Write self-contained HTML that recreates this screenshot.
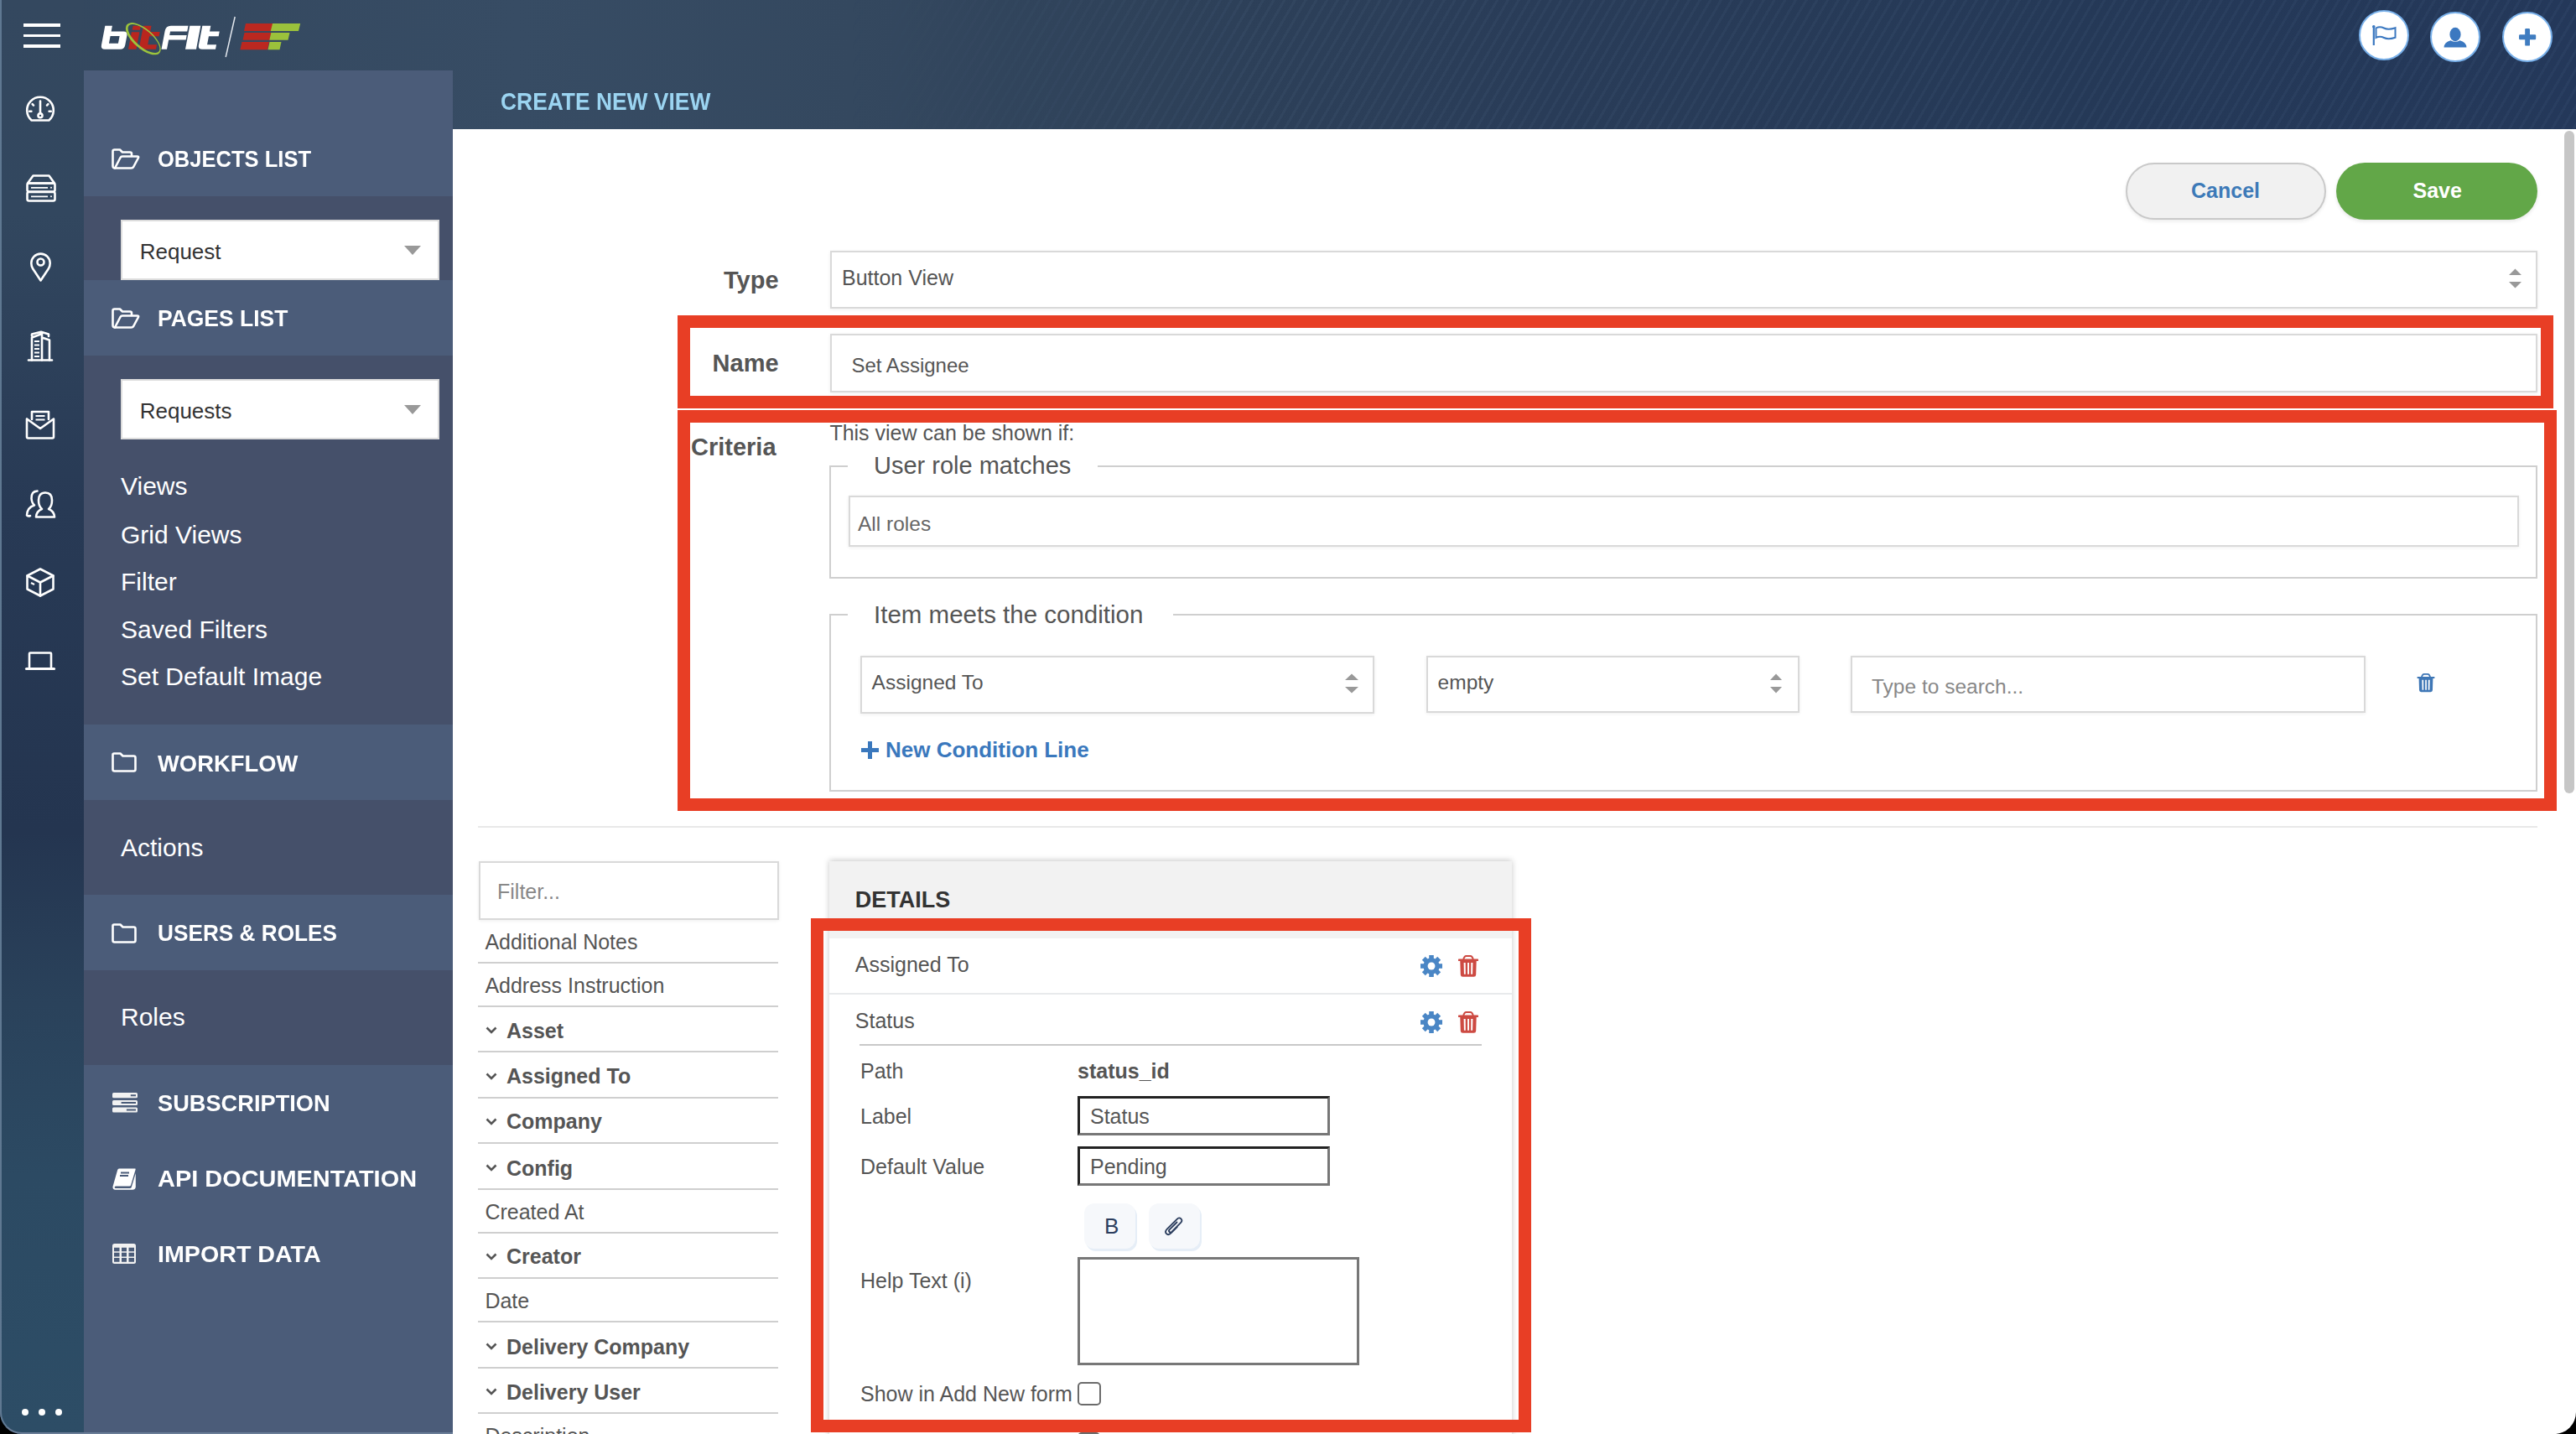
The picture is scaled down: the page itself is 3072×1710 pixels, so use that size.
<!DOCTYPE html><html><head><meta charset="utf-8"><style>
html,body{margin:0;padding:0}
body{width:3072px;height:1710px;position:relative;overflow:hidden;background:#000;font-family:"Liberation Sans",sans-serif}
.a{position:absolute}
.t{position:absolute;line-height:1;white-space:nowrap}
svg.a{overflow:visible}
</style></head><body>
<div class="a" style="left:0;top:0;width:3072px;height:154px;background:linear-gradient(90deg,#33475e 0%,#374c64 20%,#34485f 33%,#2e4159 45%,#293c58 60%,#253957 80%,#24385a 100%)"></div>
<div class="a" style="left:1000px;top:0;width:2072px;height:154px;background:repeating-linear-gradient(120deg,rgba(255,255,255,0) 0px,rgba(255,255,255,0) 8px,rgba(140,170,210,0.06) 8px,rgba(140,170,210,0.06) 11px);-webkit-mask-image:linear-gradient(90deg,transparent 0,#000 500px)"></div>
<div class="a" style="left:0;top:0;width:100px;height:1710px;background:linear-gradient(180deg,#34485f 0%,#32475f 15%,#283a55 35%,#243550 58%,#2a425b 70%,#2c4a63 82%,#2d4d66 100%)"></div>
<div class="a" style="left:0;top:0;width:2px;height:1710px;background:#5b7590"></div>
<div class="a" style="left:540.0px;top:154.0px;width:2532.0px;height:1556.0px;background:#fff"></div>
<div class="a" style="left:100.0px;top:84.0px;width:440.0px;height:150.0px;background:#4b5c79"></div>
<div class="a" style="left:100.0px;top:234.0px;width:440.0px;height:100.0px;background:#45506a"></div>
<div class="a" style="left:100.0px;top:334.0px;width:440.0px;height:90.0px;background:#4b5c79"></div>
<div class="a" style="left:100.0px;top:424.0px;width:440.0px;height:440.0px;background:#45506a"></div>
<div class="a" style="left:100.0px;top:864.0px;width:440.0px;height:90.0px;background:#4b5c79"></div>
<div class="a" style="left:100.0px;top:954.0px;width:440.0px;height:113.0px;background:#45506a"></div>
<div class="a" style="left:100.0px;top:1067.0px;width:440.0px;height:90.0px;background:#4b5c79"></div>
<div class="a" style="left:100.0px;top:1157.0px;width:440.0px;height:113.0px;background:#45506a"></div>
<div class="a" style="left:100.0px;top:1270.0px;width:440.0px;height:440.0px;background:#4b5c79"></div>
<div class="a" style="left:144.0px;top:262.0px;width:380.0px;height:72.0px;background:#fff;border:2px solid #dcdcdc;box-sizing:border-box"></div>
<div class="t" style="top:287.0px;font-size:26px;left:166.7px;color:#333;">Request</div>
<svg class="a" style="left:482px;top:292.5px" width="20" height="11"><path d="M0 0H20L10 11Z" fill="#999"/></svg>
<div class="a" style="left:144.0px;top:452.0px;width:380.0px;height:72.0px;background:#fff;border:2px solid #dcdcdc;box-sizing:border-box"></div>
<div class="t" style="top:477.0px;font-size:26px;left:166.7px;color:#333;">Requests</div>
<svg class="a" style="left:482px;top:482.5px" width="20" height="11"><path d="M0 0H20L10 11Z" fill="#999"/></svg>
<div class="t" style="top:176.3px;font-size:28px;left:188.0px;font-weight:bold;color:#fff;transform:scaleX(0.912);transform-origin:0 0;">OBJECTS LIST</div>
<div class="t" style="top:366.3px;font-size:28px;left:188.0px;font-weight:bold;color:#fff;transform:scaleX(0.945);transform-origin:0 0;">PAGES LIST</div>
<div class="t" style="top:896.9px;font-size:28px;left:188.0px;font-weight:bold;color:#fff;transform:scaleX(0.978);transform-origin:0 0;">WORKFLOW</div>
<div class="t" style="top:1099.3px;font-size:28px;left:188.0px;font-weight:bold;color:#fff;transform:scaleX(0.936);transform-origin:0 0;">USERS &amp; ROLES</div>
<div class="t" style="top:1302.3px;font-size:28px;left:188.0px;font-weight:bold;color:#fff;transform:scaleX(0.972);transform-origin:0 0;">SUBSCRIPTION</div>
<div class="t" style="top:1391.7px;font-size:28px;left:188.0px;font-weight:bold;color:#fff;transform:scaleX(1.033);transform-origin:0 0;">API DOCUMENTATION</div>
<div class="t" style="top:1481.8px;font-size:28px;left:188.0px;font-weight:bold;color:#fff;transform:scaleX(1.023);transform-origin:0 0;">IMPORT DATA</div>
<div class="t" style="top:564.6px;font-size:30px;left:144.0px;color:#fff;">Views</div>
<div class="t" style="top:622.6px;font-size:30px;left:144.0px;color:#fff;">Grid Views</div>
<div class="t" style="top:679.1px;font-size:30px;left:144.0px;color:#fff;">Filter</div>
<div class="t" style="top:735.6px;font-size:30px;left:144.0px;color:#fff;">Saved Filters</div>
<div class="t" style="top:792.1px;font-size:30px;left:144.0px;color:#fff;">Set Default Image</div>
<div class="t" style="top:995.6px;font-size:30px;left:144.0px;color:#fff;">Actions</div>
<div class="t" style="top:1198.1px;font-size:30px;left:144.0px;color:#fff;">Roles</div>
<div class="t" style="top:105.6px;font-size:30px;left:596.5px;font-weight:bold;color:#9bd4f1;transform:scaleX(0.88);transform-origin:0 0;">CREATE NEW VIEW</div>
<div class="a" style="left:2534.5px;top:194px;width:239px;height:67.5px;box-sizing:border-box;border:2px solid #c9c9c9;background:#f1f1f1;border-radius:34px;box-shadow:0 2px 4px rgba(0,0,0,.08)"></div>
<div class="t" style="top:214.6px;font-size:25px;left:2613.0px;font-weight:bold;color:#3d7ab8;">Cancel</div>
<div class="a" style="left:2786px;top:194px;width:240px;height:68px;background:#62a748;border-radius:34px;box-shadow:0 2px 4px rgba(0,0,0,.1)"></div>
<div class="t" style="top:214.6px;font-size:25px;left:2877.5px;font-weight:bold;color:#fff;">Save</div>
<div class="t" style="top:320.0px;font-size:29px;right:2143.4px;font-weight:bold;color:#555;">Type</div>
<div class="a" style="left:989.5px;top:298.5px;width:2036.5px;height:69.0px;box-sizing:border-box;border:2px solid #d9d9d9;background:#fff;box-shadow:0 1px 4px rgba(0,0,0,.07);"></div>
<div class="t" style="top:318.8px;font-size:25px;left:1004.0px;color:#555;">Button View</div>
<svg class="a" style="left:2991.5px;top:320.0px" width="15" height="24"><path d="M0 8L7.5 0.5L15 8Z M0 16L7.5 23.5L15 16Z" fill="#999"/></svg>
<div class="a" style="left:807.7px;top:376px;width:2237px;height:110.6px;box-sizing:border-box;border:15px solid #e83e25"></div>
<div class="t" style="top:419.4px;font-size:29px;right:2143.4px;font-weight:bold;color:#555;">Name</div>
<div class="a" style="left:989.5px;top:398.0px;width:2036.5px;height:70.0px;box-sizing:border-box;border:2px solid #d9d9d9;background:#fff;box-shadow:0 1px 4px rgba(0,0,0,.07);"></div>
<div class="t" style="top:423.7px;font-size:24px;left:1015.5px;color:#555;">Set Assignee</div>
<div class="a" style="left:807.5px;top:489px;width:2241px;height:477.5px;box-sizing:border-box;border:15px solid #e83e25"></div>
<div class="t" style="top:519.4px;font-size:29px;left:824.0px;font-weight:bold;color:#555;">Criteria</div>
<div class="t" style="top:504.2px;font-size:25px;left:989.4px;color:#555;">This view can be shown if:</div>
<div class="a" style="left:989px;top:555px;width:2036.7px;height:135px;box-sizing:border-box;border:2px solid #cfcfcf"></div>
<div class="a" style="left:1011.0px;top:550.0px;width:298.0px;height:10.0px;background:#fff"></div>
<div class="t" style="top:541.4px;font-size:29px;left:1042.0px;color:#555;">User role matches</div>
<div class="a" style="left:1011.5px;top:591.0px;width:1992.0px;height:61.4px;box-sizing:border-box;border:2px solid #d9d9d9;background:#fff;box-shadow:0 1px 4px rgba(0,0,0,.07);"></div>
<div class="t" style="top:613.0px;font-size:24.5px;left:1023.0px;color:#666;">All roles</div>
<div class="a" style="left:989px;top:731.7px;width:2036.5px;height:212.1px;box-sizing:border-box;border:2px solid #cfcfcf"></div>
<div class="a" style="left:1011.0px;top:726.0px;width:388.0px;height:10.0px;background:#fff"></div>
<div class="t" style="top:718.2px;font-size:29.5px;left:1042.0px;color:#555;">Item meets the condition</div>
<div class="a" style="left:1025.6px;top:781.7px;width:613.7px;height:68.9px;box-sizing:border-box;border:2px solid #d9d9d9;background:#fff;box-shadow:0 1px 4px rgba(0,0,0,.07);"></div>
<div class="t" style="top:802.0px;font-size:24.5px;left:1039.6px;color:#555;">Assigned To</div>
<svg class="a" style="left:1604.0px;top:803.0px" width="16" height="24"><path d="M0 8L8.0 0.5L16 8Z M0 16L8.0 23.5L16 16Z" fill="#999"/></svg>
<div class="a" style="left:1700.5px;top:781.7px;width:445.3px;height:68.5px;box-sizing:border-box;border:2px solid #d9d9d9;background:#fff;box-shadow:0 1px 4px rgba(0,0,0,.07);"></div>
<div class="t" style="top:802.0px;font-size:24.5px;left:1714.6px;color:#555;">empty</div>
<svg class="a" style="left:2110.7px;top:803.0px" width="14" height="24"><path d="M0 8L7.0 0.5L14 8Z M0 16L7.0 23.5L14 16Z" fill="#999"/></svg>
<div class="a" style="left:2206.8px;top:781.7px;width:613.9px;height:68.5px;box-sizing:border-box;border:2px solid #d9d9d9;background:#fff;box-shadow:0 1px 4px rgba(0,0,0,.07);"></div>
<div class="t" style="top:807.3px;font-size:24.5px;left:2232.0px;color:#888;">Type to search...</div>
<div class="t" style="top:881.4px;font-size:26px;left:1056.0px;font-weight:bold;color:#3a78bd;">New Condition Line</div>
<svg class="a" style="left:1026.6px;top:884px" width="21" height="21"><path d="M8 0H13V8H21V13H13V21H8V13H0V8H8Z" fill="#3a78bd"/></svg>
<div class="a" style="left:570.0px;top:985.0px;width:2456.0px;height:2.0px;background:#e8e8e8"></div>
<div class="a" style="left:570.5px;top:1027.0px;width:358.0px;height:69.7px;box-sizing:border-box;border:2px solid #d9d9d9;background:#fff;box-shadow:0 1px 4px rgba(0,0,0,.07);"></div>
<div class="t" style="top:1050.8px;font-size:25px;left:593.0px;color:#888;">Filter...</div>
<div class="t" style="top:1110.8px;font-size:25px;left:578.4px;color:#555;">Additional Notes</div>
<div class="a" style="left:570.0px;top:1147.0px;width:358.0px;height:2.0px;background:#cfcfcf"></div>
<div class="t" style="top:1162.8px;font-size:25px;left:578.4px;color:#555;">Address Instruction</div>
<div class="a" style="left:570.0px;top:1199.0px;width:358.0px;height:2.0px;background:#cfcfcf"></div>
<div class="t" style="top:1216.8px;font-size:25px;left:604.0px;font-weight:bold;color:#555;">Asset</div>
<svg class="a" style="left:579px;top:1224.0px" width="14" height="9"><path d="M1.5 1.5L7 7L12.5 1.5" stroke="#555" stroke-width="2.6" fill="none"/></svg>
<div class="a" style="left:570.0px;top:1253.0px;width:358.0px;height:2.0px;background:#cfcfcf"></div>
<div class="t" style="top:1271.4px;font-size:25px;left:604.0px;font-weight:bold;color:#555;">Assigned To</div>
<svg class="a" style="left:579px;top:1278.6px" width="14" height="9"><path d="M1.5 1.5L7 7L12.5 1.5" stroke="#555" stroke-width="2.6" fill="none"/></svg>
<div class="a" style="left:570.0px;top:1307.6px;width:358.0px;height:2.0px;background:#cfcfcf"></div>
<div class="t" style="top:1325.4px;font-size:25px;left:604.0px;font-weight:bold;color:#555;">Company</div>
<svg class="a" style="left:579px;top:1332.6px" width="14" height="9"><path d="M1.5 1.5L7 7L12.5 1.5" stroke="#555" stroke-width="2.6" fill="none"/></svg>
<div class="a" style="left:570.0px;top:1361.6px;width:358.0px;height:2.0px;background:#cfcfcf"></div>
<div class="t" style="top:1380.8px;font-size:25px;left:604.0px;font-weight:bold;color:#555;">Config</div>
<svg class="a" style="left:579px;top:1388.0px" width="14" height="9"><path d="M1.5 1.5L7 7L12.5 1.5" stroke="#555" stroke-width="2.6" fill="none"/></svg>
<div class="a" style="left:570.0px;top:1417.0px;width:358.0px;height:2.0px;background:#cfcfcf"></div>
<div class="t" style="top:1432.8px;font-size:25px;left:578.4px;color:#555;">Created At</div>
<div class="a" style="left:570.0px;top:1469.0px;width:358.0px;height:2.0px;background:#cfcfcf"></div>
<div class="t" style="top:1486.4px;font-size:25px;left:604.0px;font-weight:bold;color:#555;">Creator</div>
<svg class="a" style="left:579px;top:1493.6px" width="14" height="9"><path d="M1.5 1.5L7 7L12.5 1.5" stroke="#555" stroke-width="2.6" fill="none"/></svg>
<div class="a" style="left:570.0px;top:1522.6px;width:358.0px;height:2.0px;background:#cfcfcf"></div>
<div class="t" style="top:1538.8px;font-size:25px;left:578.4px;color:#555;">Date</div>
<div class="a" style="left:570.0px;top:1575.0px;width:358.0px;height:2.0px;background:#cfcfcf"></div>
<div class="t" style="top:1593.8px;font-size:25px;left:604.0px;font-weight:bold;color:#555;">Delivery Company</div>
<svg class="a" style="left:579px;top:1601.0px" width="14" height="9"><path d="M1.5 1.5L7 7L12.5 1.5" stroke="#555" stroke-width="2.6" fill="none"/></svg>
<div class="a" style="left:570.0px;top:1630.0px;width:358.0px;height:2.0px;background:#cfcfcf"></div>
<div class="t" style="top:1647.8px;font-size:25px;left:604.0px;font-weight:bold;color:#555;">Delivery User</div>
<svg class="a" style="left:579px;top:1655.0px" width="14" height="9"><path d="M1.5 1.5L7 7L12.5 1.5" stroke="#555" stroke-width="2.6" fill="none"/></svg>
<div class="a" style="left:570.0px;top:1684.0px;width:358.0px;height:2.0px;background:#cfcfcf"></div>
<div class="t" style="top:1699.8px;font-size:25px;left:578.4px;color:#555;">Description</div>
<div class="a" style="left:989px;top:1027px;width:814px;height:720px;background:#fff;box-shadow:0 -1px 7px rgba(0,0,0,.22)"></div>
<div class="a" style="left:989.0px;top:1027.0px;width:814.0px;height:91.6px;background:#f2f2f2"></div>
<div class="t" style="top:1059.9px;font-size:27px;left:1019.8px;font-weight:bold;color:#333;">DETAILS</div>
<div class="a" style="left:989.0px;top:1184.0px;width:814.0px;height:2.0px;background:#e8eaec"></div>
<div class="t" style="top:1138.1px;font-size:25px;left:1019.8px;color:#555;">Assigned To</div>
<div class="t" style="top:1204.8px;font-size:25px;left:1019.8px;color:#555;">Status</div>
<svg class="a" style="left:1693.8px;top:1139.2px" width="26" height="26" viewBox="0 0 25.7 25.7"><g fill="#4a86c5"><rect x="10.1" y="0" width="5.5" height="25.7" transform="rotate(0 12.85 12.85)"/><rect x="10.1" y="0" width="5.5" height="25.7" transform="rotate(45 12.85 12.85)"/><rect x="10.1" y="0" width="5.5" height="25.7" transform="rotate(90 12.85 12.85)"/><rect x="10.1" y="0" width="5.5" height="25.7" transform="rotate(135 12.85 12.85)"/><circle cx="12.85" cy="12.85" r="9.6"/></g><circle cx="12.85" cy="12.85" r="4.4" fill="#fff"/></svg>
<svg class="a" style="left:1739px;top:1138.7px" width="24" height="26" viewBox="0 0 24 26"><path d="M6.2 5Q7.2 1 9.5 1H14.5Q16.8 1 17.8 5" stroke="#cd4a42" stroke-width="2" fill="none"/><rect x="0" y="4.6" width="24" height="2.4" rx="0.6" fill="#cd4a42"/><path fill="#cd4a42" fill-rule="evenodd" d="M2.3 7H21.7L21.2 23.2Q21.1 25.7 18.6 25.7H5.4Q2.9 25.7 2.8 23.2Z M6.6 8.9L6.9 22.8H8.8L8.7 8.9Z M11.1 8.9V22.8H13V8.9Z M15.3 8.9L15.2 22.8H17.1L17.4 8.9Z"/></svg>
<svg class="a" style="left:1693.8px;top:1206.4px" width="26" height="26" viewBox="0 0 25.7 25.7"><g fill="#4a86c5"><rect x="10.1" y="0" width="5.5" height="25.7" transform="rotate(0 12.85 12.85)"/><rect x="10.1" y="0" width="5.5" height="25.7" transform="rotate(45 12.85 12.85)"/><rect x="10.1" y="0" width="5.5" height="25.7" transform="rotate(90 12.85 12.85)"/><rect x="10.1" y="0" width="5.5" height="25.7" transform="rotate(135 12.85 12.85)"/><circle cx="12.85" cy="12.85" r="9.6"/></g><circle cx="12.85" cy="12.85" r="4.4" fill="#fff"/></svg>
<svg class="a" style="left:1739px;top:1205.9px" width="24" height="26" viewBox="0 0 24 26"><path d="M6.2 5Q7.2 1 9.5 1H14.5Q16.8 1 17.8 5" stroke="#cd4a42" stroke-width="2" fill="none"/><rect x="0" y="4.6" width="24" height="2.4" rx="0.6" fill="#cd4a42"/><path fill="#cd4a42" fill-rule="evenodd" d="M2.3 7H21.7L21.2 23.2Q21.1 25.7 18.6 25.7H5.4Q2.9 25.7 2.8 23.2Z M6.6 8.9L6.9 22.8H8.8L8.7 8.9Z M11.1 8.9V22.8H13V8.9Z M15.3 8.9L15.2 22.8H17.1L17.4 8.9Z"/></svg>
<svg class="a" style="left:2882.3px;top:803px" width="22" height="22.5" viewBox="0 0 24 26"><path d="M6.2 5Q7.2 1 9.5 1H14.5Q16.8 1 17.8 5" stroke="#3f77b6" stroke-width="2" fill="none"/><rect x="0" y="4.6" width="24" height="2.4" rx="0.6" fill="#3f77b6"/><path fill="#3f77b6" fill-rule="evenodd" d="M2.3 7H21.7L21.2 23.2Q21.1 25.7 18.6 25.7H5.4Q2.9 25.7 2.8 23.2Z M6.6 8.9L6.9 22.8H8.8L8.7 8.9Z M11.1 8.9V22.8H13V8.9Z M15.3 8.9L15.2 22.8H17.1L17.4 8.9Z"/></svg>
<div class="a" style="left:1025.0px;top:1244.5px;width:742.0px;height:2.5px;background:#c8c8c8"></div>
<div class="t" style="top:1264.8px;font-size:25px;left:1026.0px;color:#555;">Path</div>
<div class="t" style="top:1264.8px;font-size:25px;left:1285.0px;font-weight:bold;color:#555;">status_id</div>
<div class="t" style="top:1318.8px;font-size:25px;left:1026.0px;color:#555;">Label</div>
<div class="t" style="top:1378.8px;font-size:25px;left:1026.0px;color:#555;">Default Value</div>
<div class="a" style="left:1285px;top:1307.3px;width:301px;height:47.2px;box-sizing:border-box;border:3.5px solid;border-color:#222 #777 #777 #222;background:#fff"></div>
<div class="t" style="top:1319.1px;font-size:25px;left:1300.0px;color:#555;">Status</div>
<div class="a" style="left:1285px;top:1367px;width:301px;height:47.2px;box-sizing:border-box;border:3.5px solid;border-color:#222 #777 #777 #222;background:#fff"></div>
<div class="t" style="top:1378.8px;font-size:25px;left:1300.0px;color:#555;">Pending</div>
<div class="a" style="left:1293px;top:1435.4px;width:61px;height:54px;background:#f6f8fb;border-radius:12px;box-shadow:2px 3px 0 #e6eef7"></div>
<div class="a" style="left:1370px;top:1435.4px;width:61px;height:54px;background:#f6f8fb;border-radius:12px;box-shadow:2px 3px 0 #e6eef7"></div>
<div class="t" style="top:1449.0px;font-size:26px;left:1317.0px;color:#2c3e5e;">B</div>
<svg class="a" style="left:1388px;top:1451px" width="24" height="22" viewBox="0 0 24 22"><path d="M15.5 6.5L6.8 15.2Q5.3 16.7 6.6 18Q7.9 19.3 9.4 17.8L20 7.2Q22.6 4.6 20.4 2.4Q18.2 0.2 15.6 2.8L4 14.4Q0.6 17.8 3 20.2Q5.4 22.6 8.8 19.2L15.8 12.2" stroke="#2c3e5e" stroke-width="1.9" fill="none" stroke-linecap="round"/></svg>
<div class="t" style="top:1515.3px;font-size:25px;left:1026.0px;color:#555;">Help Text (i)</div>
<div class="a" style="left:1285px;top:1498.6px;width:336px;height:129.2px;box-sizing:border-box;border:3.5px solid #777;background:#fff"></div>
<div class="t" style="top:1649.8px;font-size:25px;left:1026.0px;color:#555;">Show in Add New form</div>
<div class="a" style="left:1285.4px;top:1648px;width:27.2px;height:27.5px;box-sizing:border-box;border:2.3px solid #6b6b6b;border-radius:5px;background:#fff"></div>
<div class="a" style="left:1285.4px;top:1708px;width:27px;height:27px;box-sizing:border-box;border:2.3px solid #6b6b6b;border-radius:5px"></div>
<div class="a" style="left:966.8px;top:1094.7px;width:859.2px;height:613.3px;box-sizing:border-box;border:15.4px solid #e83e25"></div>
<div class="a" style="left:3058.0px;top:156.0px;width:12.0px;height:790.0px;background:#c6c6c6;border-radius:6px"></div>
<div class="a" style="left:2812.6px;top:11.799999999999997px;width:60px;height:60px;box-sizing:border-box;border-radius:50%;background:#fff;border:2.5px solid #78b0ea"></div>
<svg class="a" style="left:2829px;top:30px" width="30" height="25" viewBox="0 0 30 25"><circle cx="1.8" cy="1.8" r="1.8" fill="#3b78c0"/><path d="M1.8 2V24" stroke="#3b78c0" stroke-width="2.2"/><path d="M4.5 3.5Q9 1 14 3.5Q19 6 27.5 3.2V14.8Q19 17.6 14 15Q9 12.5 4.5 15Z" stroke="#3b78c0" stroke-width="2" fill="none"/></svg>
<div class="a" style="left:2898px;top:14px;width:60px;height:60px;box-sizing:border-box;border-radius:50%;background:#fff;border:2.5px solid #78b0ea"></div>
<svg class="a" style="left:2914px;top:31.5px" width="28" height="25" viewBox="0 0 28 25"><ellipse cx="14" cy="9" rx="6.6" ry="8.2" fill="#3b78c0"/><path d="M0.5 24.5Q1 18 8.5 16.2Q14 19.5 19.5 16.2Q27 18 27.5 24.5Z" fill="#3b78c0"/></svg>
<div class="a" style="left:2984px;top:14px;width:60px;height:60px;box-sizing:border-box;border-radius:50%;background:#fff;border:2.5px solid #78b0ea"></div>
<svg class="a" style="left:3003.8px;top:34.3px" width="20.2" height="20.6" viewBox="0 0 20.2 20.6"><rect x="7.2" y="0" width="5.8" height="20.6" rx="1.2" fill="#3f7cc0"/><rect x="0" y="7.3" width="20.2" height="6" rx="1.2" fill="#3f7cc0"/></svg>
<div class="a" style="left:28.0px;top:28.0px;width:44.0px;height:3.6px;background:#fff"></div>
<div class="a" style="left:28.0px;top:40.5px;width:44.0px;height:3.6px;background:#fff"></div>
<div class="a" style="left:28.0px;top:53.0px;width:44.0px;height:3.6px;background:#fff"></div>
<svg class="a" style="left:31px;top:116px" width="34" height="29" viewBox="0 0 34 29"><path d="M6.6 27.5H27.4A15.8 15.8 0 1 0 6.6 27.5Z" stroke="#fff" stroke-width="2.6" fill="none" stroke-linecap="round" stroke-linejoin="round"/><path d="M17 4.5V19.5" stroke="#fff" stroke-width="2.6" fill="none" stroke-linecap="round" stroke-linejoin="round" stroke-width="2.2"/><circle cx="17" cy="21.8" r="2.5" stroke="#fff" stroke-width="2.6" fill="none" stroke-linecap="round" stroke-linejoin="round" stroke-width="2.2"/><path d="M4.2 16.8H6.4M27.6 16.8H29.8M7.6 8.2L9 9.6M26.4 8.2L25 9.6" stroke="#fff" stroke-width="2.6" fill="none" stroke-linecap="round" stroke-linejoin="round" stroke-width="2"/></svg>
<svg class="a" style="left:30.5px;top:208px" width="36" height="33" viewBox="0 0 36 33"><path d="M8.5 1.5H27.5L34 10.5H2Z" stroke="#fff" stroke-width="2.6" fill="none" stroke-linecap="round" stroke-linejoin="round"/><rect x="1.5" y="10.5" width="33" height="10" rx="2" stroke="#fff" stroke-width="2.6" fill="none" stroke-linecap="round" stroke-linejoin="round"/><rect x="1.5" y="21" width="33" height="10.5" rx="2" stroke="#fff" stroke-width="2.6" fill="none" stroke-linecap="round" stroke-linejoin="round"/><path d="M6 15.8H26M6 26.3H26" stroke="#fff" stroke-width="1.8"/><circle cx="30" cy="15.8" r="1" fill="#fff"/><circle cx="30" cy="26.3" r="1" fill="#fff"/></svg>
<svg class="a" style="left:35.5px;top:301px" width="25" height="35" viewBox="0 0 25 35"><path d="M12.5 33.5L3.2 19.5Q1.3 16.5 1.3 12.8A11.2 11.2 0 0 1 23.7 12.8Q23.7 16.5 21.8 19.5Z" stroke="#fff" stroke-width="2.6" fill="none" stroke-linecap="round" stroke-linejoin="round"/><circle cx="12.5" cy="11.5" r="4" stroke="#fff" stroke-width="2.6" fill="none" stroke-linecap="round" stroke-linejoin="round" stroke-width="2.2"/></svg>
<svg class="a" style="left:33px;top:395px" width="30" height="36" viewBox="0 0 30 36"><path d="M1 34.5H29" stroke="#fff" stroke-width="2.6" fill="none" stroke-linecap="round" stroke-linejoin="round"/><path d="M5 34.5V7.5L17 3V34.5M17 7.5L26 10.5V34.5M5 5.5V3.5L16 0.8L25 3.5V6" stroke="#fff" stroke-width="2.6" fill="none" stroke-linecap="round" stroke-linejoin="round" stroke-width="2.4"/><path d="M8 12H14M8 16.5H14M8 21H14M8 25.5H14M8 30H14" stroke="#fff" stroke-width="2.2"/></svg>
<svg class="a" style="left:30px;top:489px" width="36" height="35" viewBox="0 0 36 35"><path d="M8 11V2H28V11" stroke="#fff" stroke-width="2.6" fill="none" stroke-linecap="round" stroke-linejoin="round"/><path d="M12.5 7H23.5M12.5 11.5H23.5" stroke="#fff" stroke-width="2"/><path d="M2 10.5V32Q2 33.5 3.5 33.5H32.5Q34 33.5 34 32V10.5L18 22L2 10.5" stroke="#fff" stroke-width="2.6" fill="none" stroke-linecap="round" stroke-linejoin="round"/></svg>
<svg class="a" style="left:30px;top:583.6px" width="36" height="34" viewBox="0 0 36 34"><path d="M13 32.5Q13.5 25.5 20 23Q16 20 16 12.5Q16 3.5 24 3.5Q32 3.5 32 12.5Q32 20 28 23Q34.5 25.5 35 32.5Z" stroke="#fff" stroke-width="2.6" fill="none" stroke-linecap="round" stroke-linejoin="round"/><path d="M14.5 1.5Q7 2 7.5 10.5Q8 16 11 18.5Q2.5 21 2 30.5Q4 32 6 31" stroke="#fff" stroke-width="2.6" fill="none" stroke-linecap="round" stroke-linejoin="round"/></svg>
<svg class="a" style="left:31px;top:677px" width="34" height="35" viewBox="0 0 34 35"><path d="M17 1.5L32.5 9.5V25.5L17 33.5L1.5 25.5V9.5Z" stroke="#fff" stroke-width="2.6" fill="none" stroke-linecap="round" stroke-linejoin="round"/><path d="M1.5 9.5L17 17.5L32.5 9.5M17 17.5V33.5" stroke="#fff" stroke-width="2.6" fill="none" stroke-linecap="round" stroke-linejoin="round"/><path d="M6 18L10 20" stroke="#fff" stroke-width="2.2"/></svg>
<svg class="a" style="left:30px;top:776.6px" width="36" height="23" viewBox="0 0 36 23"><path d="M5 18.5V2.5Q5 1.5 6 1.5H30Q31 1.5 31 2.5V18.5" stroke="#fff" stroke-width="2.6" fill="none" stroke-linecap="round" stroke-linejoin="round"/><path d="M1.5 20.5H34.5" stroke="#fff" stroke-width="3.2" stroke-linecap="round"/></svg>
<div class="a" style="left:25.8px;top:1679.5px;width:8.4px;height:8.4px;border-radius:50%;background:#fff"></div>
<div class="a" style="left:45.8px;top:1679.5px;width:8.4px;height:8.4px;border-radius:50%;background:#fff"></div>
<div class="a" style="left:65.8px;top:1679.5px;width:8.4px;height:8.4px;border-radius:50%;background:#fff"></div>
<svg class="a" style="left:133px;top:177px" width="34" height="25" viewBox="0 0 34 25"><path d="M4 23.5Q1.5 23.5 1.5 21V3.5Q1.5 1.5 3.5 1.5H10L13 4.5H22Q24 4.5 24 6.5V9" stroke="#fff" stroke-width="2.6" fill="none" stroke-linecap="round" stroke-linejoin="round" stroke-width="2.2"/><path d="M4 23.5L10.5 11Q11.3 9.5 13 9.5H30.5Q33 9.5 31.8 11.5L26.2 22Q25.3 23.5 23.5 23.5Z" stroke="#fff" stroke-width="2.6" fill="none" stroke-linecap="round" stroke-linejoin="round" stroke-width="2.2"/></svg>
<svg class="a" style="left:133px;top:367px" width="34" height="25" viewBox="0 0 34 25"><path d="M4 23.5Q1.5 23.5 1.5 21V3.5Q1.5 1.5 3.5 1.5H10L13 4.5H22Q24 4.5 24 6.5V9" stroke="#fff" stroke-width="2.6" fill="none" stroke-linecap="round" stroke-linejoin="round" stroke-width="2.2"/><path d="M4 23.5L10.5 11Q11.3 9.5 13 9.5H30.5Q33 9.5 31.8 11.5L26.2 22Q25.3 23.5 23.5 23.5Z" stroke="#fff" stroke-width="2.6" fill="none" stroke-linecap="round" stroke-linejoin="round" stroke-width="2.2"/></svg>
<svg class="a" style="left:133px;top:897px" width="30" height="24" viewBox="0 0 30 24"><path d="M3.5 22.5Q1.5 22.5 1.5 20.5V3Q1.5 1.5 3 1.5H10.5L13.5 4.5H26.5Q28.5 4.5 28.5 6.5V20.5Q28.5 22.5 26.5 22.5Z" stroke="#fff" stroke-width="2.6" fill="none" stroke-linecap="round" stroke-linejoin="round" stroke-width="2.2"/></svg>
<svg class="a" style="left:133px;top:1101px" width="30" height="24" viewBox="0 0 30 24"><path d="M3.5 22.5Q1.5 22.5 1.5 20.5V3Q1.5 1.5 3 1.5H10.5L13.5 4.5H26.5Q28.5 4.5 28.5 6.5V20.5Q28.5 22.5 26.5 22.5Z" stroke="#fff" stroke-width="2.6" fill="none" stroke-linecap="round" stroke-linejoin="round" stroke-width="2.2"/></svg>
<svg class="a" style="left:134px;top:1303.3px" width="30" height="24" viewBox="0 0 30 24"><rect x="0" y="0" width="30" height="6.3" rx="1.5" fill="#f2f2f2"/><rect x="0" y="9" width="30" height="6" rx="1.5" fill="#f2f2f2"/><rect x="0" y="17.6" width="30" height="6" rx="1.5" fill="#f2f2f2"/><path d="M21.8 2.2H28V4.2H21.8Z M10.6 11H28V13H10.6Z M16.9 19.6H28V21.6H16.9Z" fill="#4b5c79"/></svg>
<svg class="a" style="left:134px;top:1393.4px" width="28" height="26" viewBox="0 0 28 26"><path d="M8 0.5H27Q28 0.5 27.6 1.8L22 20.5Q21.5 21.5 20.5 21.5H4Q2.5 21.5 2.6 23.2Q2.8 24 4 24H21Q22.3 24 22.7 23L27.8 6V22.5Q27.2 25.8 24 25.8H3.5Q0.2 25.8 0.5 22L6.2 2Q6.7 0.5 8 0.5Z" fill="#fff"/><path d="M10 5.5H20M9 9H19" stroke="#4b5c79" stroke-width="1.8"/></svg>
<svg class="a" style="left:134px;top:1483px" width="28" height="24" viewBox="0 0 28 24"><rect x="0" y="0" width="28" height="24" rx="2.5" fill="#f2f2f2"/><path d="M2 4.8H8.5V9.2H2Z M11 4.8H17V9.2H11Z M19.5 4.8H26V9.2H19.5Z M2 10.8H8.5V15.5H2Z M11 10.8H17V15.5H11Z M19.5 10.8H26V15.5H19.5Z M2 17H8.5V21.7H2Z M11 17H17V21.7H11Z M19.5 17H26V21.7H19.5Z" fill="#4b5c79"/></svg>
<svg class="a" style="left:0px;top:0px" width="400" height="90" viewBox="0 0 400 90"><g transform="matrix(1 0 -0.19 1 125.32 30.8)"><path fill="#fff" fill-rule="evenodd" d="M0 0H8.6V6.7H23.3Q28.3 6.7 28.3 11.7V23Q28.3 28 23.3 28H5Q0 28 0 23Z M8.6 12.2V21H19.6V12.2Z"/><path fill="#b9261e" d="M33.3 0H42.6V5H33.3Z M33 7.5H42.5V28H33Z M45.6 0H55.2V7.3H66.7V12.5H55.2V22.5H66V28H45.6Z"/><path fill="#fff" d="M78.5 0H99.2V6.7H79V11.3H99.5V16.6H79V28H72.5V6Q72.5 0 78.5 0Z M101 0H114V28H101Z M116 0H126V6.7H137.7V12.5H126V22.5H137V28H121Q116 28 116 23Z"/></g><path fill="#9cc43c" fill-rule="evenodd" transform="rotate(41 170.8 46.2)" d="M145 46.2A25.8 11.8 0 1 0 196.6 46.2A25.8 11.8 0 1 0 145 46.2Z M147.6 45.6A23.6 9.6 0 1 0 194.8 45.6A23.6 9.6 0 1 0 147.6 45.6Z"/><path d="M280.2 20L269.2 68" stroke="#e3e8ee" stroke-width="1.5"/><path d="M293 28H326L324 37H291Z M291.5 39.1H323.5L321.5 47.8H289.5Z M288.5 50H321L319 59.2H286.4Z" fill="#bb2820"/><path d="M325 28H358.2L356 37H322.8Z M323.3 39.1H345.5L343.5 47.8H321.3Z M321.5 50H335.5L333.5 59.2H319.5Z" fill="#9bc13b"/></svg>
<div class="a" style="left:0;top:-10px;width:3072px;height:1720px;border-radius:0 0 26px 26px;box-shadow:0 0 0 60px #000"></div>
<div class="a" style="left:0;top:-10px;width:540px;height:1720px;box-sizing:border-box;border-left:2px solid #5f7891;border-bottom:2.5px solid #6a7d97;border-radius:0 0 0 26px"></div>
</body></html>
